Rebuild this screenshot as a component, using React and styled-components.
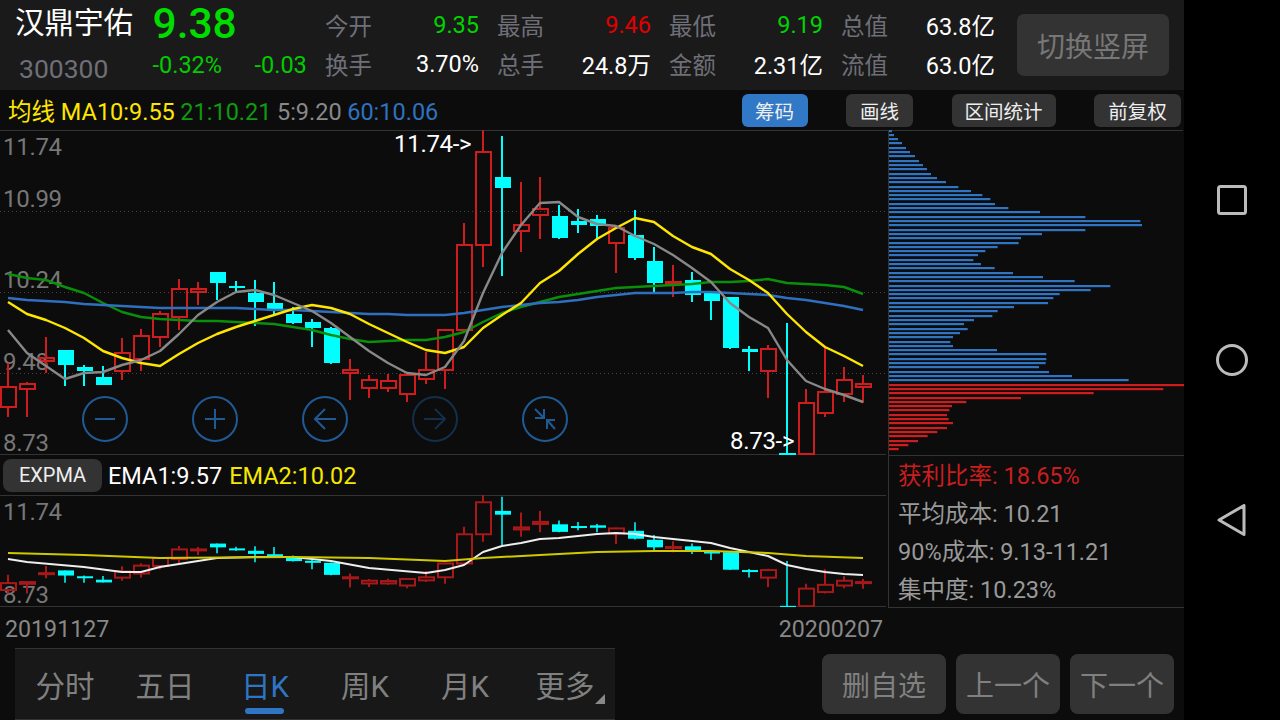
import React from 'react';
import styled, { createGlobalStyle } from 'styled-components';

const GlobalStyle = createGlobalStyle`
  html, body {
    margin: 0;
    background: #000;
    font-family: Roboto, "Noto Sans CJK SC", sans-serif;
  }
  * { box-sizing: border-box; }
`;

// [high, bodyTop, bodyBottom, low, kind]
const candles = [
  [363, 387, 407, 417, 'r'], [382, 384, 389, 417, 'r'], [337, 358, 361, 373, 'r'], [350, 350, 365, 386, 'c'],
  [365, 367, 371, 386, 'c'], [366, 377, 385, 385, 'c'], [338, 353, 371, 380, 'r'], [329, 336, 359, 371, 'r'],
  [311, 314, 337, 347, 'r'], [279, 289, 317, 330, 'r'], [282, 289, 292, 305, 'r'], [272, 272, 283, 300, 'c'],
  [281, 286, 288, 293, 'c'], [280, 293, 302, 326, 'c'], [282, 303, 311, 314, 'c'], [307, 314, 323, 324, 'c'],
  [319, 322, 328, 347, 'c'], [327, 328, 363, 364, 'c'], [359, 370, 373, 400, 'r'], [375, 380, 388, 398, 'r'],
  [374, 381, 388, 392, 'r'], [375, 375, 394, 402, 'r'], [352, 370, 379, 384, 'r'], [330, 330, 370, 389, 'r'],
  [223, 245, 330, 331, 'r'], [130, 152, 245, 267, 'r'], [136, 177, 188, 276, 'c'], [182, 225, 231, 252, 'r'],
  [177, 209, 215, 239, 'r'], [205, 216, 238, 239, 'c'], [209, 221, 225, 233, 'c'], [215, 219, 226, 239, 'c'],
  [225, 228, 243, 273, 'r'], [210, 235, 258, 260, 'c'], [247, 261, 283, 292, 'c'], [265, 282, 284, 297, 'r'],
  [272, 280, 295, 302, 'c'], [293, 293, 301, 320, 'c'], [297, 297, 348, 349, 'c'], [346, 349, 352, 371, 'c'],
  [345, 349, 371, 398, 'r'], [323, 453, 454, 454, 'c'], [389, 403, 454, 454, 'r'], [347, 392, 413, 417, 'r'],
  [367, 380, 394, 402, 'r'], [375, 384, 387, 403, 'r'],
];

const yellowLine = [302, 314, 320, 328, 338, 351, 358, 363, 366, 354, 343, 334, 327, 321, 315, 309, 305, 308, 314, 324, 333, 342, 350, 353, 347, 328, 315, 303, 283, 271, 254, 239, 228, 218, 222, 236, 247, 254, 269, 280, 293, 314, 332, 347, 356, 366];
const grayLine = [330, 353, 366, 379, 373, 372, 365, 360, 351, 334, 315, 302, 292, 290, 295, 303, 311, 323, 337, 351, 363, 373, 375, 367, 341, 293, 253, 225, 203, 202, 217, 224, 226, 236, 244, 255, 268, 282, 303, 317, 328, 360, 381, 389, 395, 402];
const greenLine = [274, 278, 280, 287, 293, 303, 312, 317, 319, 320, 321, 321, 322, 323, 324, 327, 330, 335, 339, 342, 341, 340, 340, 337, 332, 322, 313, 307, 302, 297, 294, 291, 288, 287, 286, 285, 284, 282, 282, 281, 279, 283, 284, 285, 287, 294];
const blueLine = [298, 300, 301, 302, 304, 305, 306, 307, 308, 308, 308, 308, 308, 309, 310, 310, 311, 312, 313, 314, 314, 315, 315, 315, 313, 310, 307, 305, 303, 302, 300, 297, 295, 293, 293, 293, 292, 292, 293, 294, 295, 298, 300, 303, 306, 310];

const emaWhite = [[8, 559], [27, 562], [84, 567], [122, 572], [141, 572], [160, 567], [217, 558], [255, 557], [293, 557], [331, 561], [369, 568], [426, 573], [445, 570], [464, 565], [483, 552], [502, 546], [521, 543], [540, 539], [559, 538], [578, 536], [597, 534], [616, 533], [635, 534], [654, 537], [673, 539], [692, 541], [711, 543], [730, 548], [749, 552], [768, 556], [787, 565], [806, 569], [825, 572], [844, 574], [863, 575]];
const emaYellow = [[8, 553], [84, 555], [160, 558], [293, 557], [369, 558], [445, 561], [483, 558], [540, 555], [597, 552], [654, 551], [711, 551], [768, 553], [806, 556], [863, 558]];

// y and right edge of each bar, in px/3 from the crop of the chip distribution
const blueBars = [[3, 18], [15, 24], [27, 36], [39, 48], [54, 60], [66, 72], [78, 87], [93, 99], [105, 111], [117, 123], [132, 135], [144, 153], [156, 180], [171, 217], [183, 255], [195, 289], [207, 313], [222, 327], [234, 367], [246, 462], [261, 598], [273, 763], [285, 768], [300, 598], [312, 468], [324, 405], [339, 398], [351, 335], [363, 298], [375, 276], [390, 262], [402, 285], [414, 326], [429, 381], [441, 471], [453, 566], [468, 673], [480, 614], [492, 521], [504, 502], [519, 486], [531, 384], [543, 335], [558, 319], [570, 264], [582, 234], [597, 245], [609, 222], [621, 201], [636, 193], [648, 201], [660, 333], [672, 481], [687, 481], [699, 479], [711, 459], [726, 489], [738, 558], [750, 728]];
const redBars = [[765, 894], [777, 832], [789, 623], [804, 405], [816, 241], [828, 198], [840, 190], [855, 183], [867, 188], [879, 201], [894, 183], [906, 154], [918, 125], [933, 96], [945, 67], [957, 38]];

const stats = [
  [['今开', '9.35', '#00d400'], ['换手', '3.70%', '#fff']],
  [['最高', '9.46', '#e00000'], ['总手', '24.8万', '#fff']],
  [['最低', '9.19', '#00d400'], ['金额', '2.31亿', '#fff']],
  [['总值', '63.8亿', '#fff'], ['流值', '63.0亿', '#fff']],
];

const tabs = ['分时', '五日', '日K', '周K', '月K', '更多'];

const Screen = styled.div`
  width: 1280px;
  height: 720px;
  display: flex;
  overflow: hidden;
  background: #000;
`;
const Main = styled.div`
  width: 1184px;
  height: 720px;
  display: flex;
  flex-direction: column;
  background: #0c0c0c;
`;
const Header = styled.header`
  height: 90px;
  flex: none;
  display: flex;
  padding: 5px 15px 0;
  background: #1a1a1a;
`;
const Identity = styled.div`
  width: 310px;
  display: grid;
  grid-template-columns: 137.5px 102px 70.5px;
  grid-template-rows: 39px 39px;
  align-items: center;
`;
const Name = styled.div`
  padding-bottom: 4px;
  font-size: 29.5px;
  color: #fff;
  line-height: 32px;
`;
const Price = styled.div`
  grid-column: span 2;
  padding-bottom: 2px;
  font-size: 42.5px;
  font-weight: 500;
  color: #00dc00;
  line-height: 40px;
`;
const Code = styled.div`
  padding: 10px 0 0 4px;
  font-size: 26.5px;
  color: #6f6f78;
`;
const Change = styled.div`
  padding-top: 2px;
  font-size: 23.5px;
  color: #00cc00;
`;
const StatGrid = styled.div`
  display: grid;
  grid-template-columns: repeat(4, 154px);
  grid-template-rows: 39px 39px;
  column-gap: 18px;
  align-items: center;
`;
const Stat = styled.div`
  display: flex;
  justify-content: space-between;
  align-items: center;
`;
const StatLabel = styled.span`
  font-size: 23.5px;
  color: #6f6f78;
`;
const StatValue = styled.span`
  font-size: 23.5px;
  color: ${(p) => p.$color};
`;
const SwitchButton = styled.div`
  width: 152px;
  height: 62px;
  margin: 9px 0 0 22px;
  display: flex;
  align-items: center;
  justify-content: center;
  border-radius: 7px;
  background: #333;
  font-size: 28px;
  color: #777;
`;
const Toolbar = styled.div`
  height: 40px;
  flex: none;
  display: flex;
  align-items: center;
  gap: 38.5px;
  padding: 0 3px 0 8px;
  background: #0c0c0c;
`;
const MaList = styled.div`
  margin-right: auto;
  display: flex;
  align-items: baseline;
  gap: 5.5px;
  font-size: 23.5px;
`;
const MaItem = styled.span`
  color: ${(p) => p.$color};
`;
const ToolButton = styled.div`
  width: ${(p) => p.$width}px;
  height: 33px;
  display: flex;
  align-items: center;
  justify-content: center;
  border-radius: 6px;
  background: ${(p) => (p.$active ? '#3178c6' : '#333')};
  font-size: 19.5px;
  color: #eee;
`;
const ChartArea = styled.div`
  height: 477px;
  flex: none;
  display: grid;
  grid-template-columns: 888px 296px;
`;
const LeftCharts = styled.div`
  display: flex;
  flex-direction: column;
`;
const PricePane = styled.div`
  position: relative;
  height: 325px;
  flex: none;
`;
const ChartSvg = styled.svg`
  position: relative;
  display: block;
`;
const AxisLabel = styled.span`
  position: absolute;
  left: 3px;
  top: ${(p) => p.$top}px;
  font-size: 24px;
  letter-spacing: -0.3px;
  line-height: 28px;
  color: #777;
`;
const ExtremeLabel = styled.span`
  position: absolute;
  left: ${(p) => p.$left}px;
  top: ${(p) => p.$top}px;
  font-size: 24px;
  letter-spacing: -0.3px;
  line-height: 28px;
  color: #fff;
  z-index: 2;
`;
const ZoomControls = styled.div`
  position: absolute;
  left: 82px;
  top: 266px;
  display: flex;
  gap: 64px;
  z-index: 2;
`;
const IndicatorRow = styled.div`
  height: 40px;
  flex: none;
  display: flex;
  align-items: center;
  padding-left: 3px;
  font-size: 23.5px;
`;
const IndicatorButton = styled.div`
  width: 99px;
  height: 33px;
  margin-right: 6px;
  display: flex;
  align-items: center;
  justify-content: center;
  border-radius: 8px;
  background: #333;
  font-size: 20px;
  color: #eee;
`;
const EmaValue = styled.span`
  margin-right: 7px;
  padding-top: 2px;
  color: ${(p) => p.$color};
`;
const SubPane = styled.div`
  position: relative;
  height: 112px;
  flex: none;
`;
const RightCharts = styled.div`
  display: flex;
  flex-direction: column;
`;
const ProfilePane = styled.div`
  height: 325px;
  flex: none;
`;
const InfoPanel = styled.div`
  height: 153px;
  flex: none;
  padding: 0 0 0 9px;
  border: 1px solid #333;
  border-width: 1px 0 1px 1px;
`;
const InfoRow = styled.div`
  height: 38px;
  padding-bottom: 2px;
  display: flex;
  align-items: center;
  font-size: 23.5px;
  color: ${(p) => p.$color};
`;
const DateRow = styled.div`
  height: 41px;
  flex: none;
  width: 878px;
  margin-left: 5px;
  padding-top: 2px;
  display: flex;
  justify-content: space-between;
  align-items: center;
  font-size: 23.2px;
  color: #888;
`;
const Footer = styled.footer`
  height: 72px;
  flex: none;
  display: flex;
  padding: 0 10px 0 15px;
`;
const TabBar = styled.nav`
  width: 600px;
  display: flex;
  background: #181818;
  border-top: 1px solid #333;
  border-bottom: 1px solid #333;
`;
const Tab = styled.div`
  position: relative;
  flex: 1;
  display: flex;
  align-items: center;
  justify-content: center;
  font-size: 29.5px;
  color: ${(p) => (p.$active ? '#2f75c4' : '#808080')};
`;
const TabUnderline = styled.span`
  position: absolute;
  left: 30px;
  bottom: 5px;
  width: 39px;
  height: 6px;
  border-radius: 3px;
  background: #2f75c4;
`;
const MoreMark = styled.span`
  position: absolute;
  right: 10px;
  bottom: 15px;
  width: 10px;
  height: 10px;
  background: #888;
  clip-path: polygon(100% 0, 100% 100%, 0 100%);
`;
const Actions = styled.div`
  margin-left: auto;
  padding-top: 6px;
  display: flex;
  gap: 10px;
`;
const ActionButton = styled.div`
  width: ${(p) => p.$width}px;
  height: 60px;
  display: flex;
  align-items: center;
  justify-content: center;
  border-radius: 8px;
  background: #333;
  font-size: 28px;
  color: #808080;
`;
const NavBar = styled.div`
  width: 96px;
  height: 720px;
  display: flex;
  flex-direction: column;
  align-items: center;
  justify-content: center;
  gap: 128px;
  background: #000;
`;

const polyPoints = (ys) => ys.map((y, i) => `${8 + 19 * i},${y}`).join(' ');

const Candle = ({ data, x, map, red, cyanWick }) => {
  const [high, top, bottom, low, kind] = data;
  const [h, t, b, l] = [high, top, bottom, low].map(map);
  if (kind === 'r') {
    return (
      <g stroke={red} strokeWidth="2" fill="none">
        <line x1={x} x2={x} y1={h} y2={t} />
        <line x1={x} x2={x} y1={b} y2={l} />
        <rect x={x - 7} y={t} width={15} height={Math.max(b - t, 1)} />
      </g>
    );
  }
  return (
    <g>
      <line x1={x} x2={x} y1={h} y2={l} stroke={cyanWick} strokeWidth="2" />
      <rect x={x - 7} y={t} width={16} height={Math.max(b - t, 2)} fill="#00ffff" />
    </g>
  );
};

const MaLine = ({ points, color, width = 2.4 }) => (
  <polyline points={points} fill="none" stroke={color} strokeWidth={width} strokeLinejoin="round" />
);

const CircleButton = ({ dim, children }) => (
  <svg width="46" height="46" viewBox="-23 -23 46 46" fill="none" stroke={dim ? '#142f4b' : '#1f5a94'} strokeWidth="2">
    <circle r="22" />
    {children}
  </svg>
);

const PriceChart = () => (
  <ChartSvg width="888" height="325" viewBox="0 130 888 325">
    <line x1="0" x2="888" y1="130.5" y2="130.5" stroke="#333" />
    {[211.5, 292.5, 373.5].map((y) => (
      <line key={y} x1="0" x2="886" y1={y} y2={y} stroke="#444" strokeDasharray="1 3" />
    ))}
    <line x1="0" x2="886" y1="454.5" y2="454.5" stroke="#333" />
    {candles.map((c, i) => (
      <Candle key={i} data={c} x={8 + 19 * i} map={(y) => y} red="#d01c1c" cyanWick="#00ffff" />
    ))}
    <line x1="779" x2="795" y1="454" y2="454" stroke="#00ffff" strokeWidth="2" />
    <MaLine points={polyPoints(greenLine)} color="#0a8f0a" />
    <MaLine points={polyPoints(blueLine)} color="#2f6fbf" />
    <MaLine points={polyPoints(yellowLine)} color="#ffe600" />
    <MaLine points={polyPoints(grayLine)} color="#888" />
  </ChartSvg>
);

const SubChart = () => (
  <ChartSvg width="888" height="112" viewBox="0 495 888 112">
    <line x1="0" x2="886" y1="495.5" y2="495.5" stroke="#333" />
    <line x1="0" x2="886" y1="606.5" y2="606.5" stroke="#333" />
    {candles.map((c, i) => (
      <Candle key={i} data={c} x={8 + 19 * i} map={(y) => 450 + 0.344 * y} red="#a81818" cyanWick="#00c8c8" />
    ))}
    <MaLine points={emaWhite.map((p) => p.join(',')).join(' ')} color="#eee" width={2} />
    <MaLine points={emaYellow.map((p) => p.join(',')).join(' ')} color="#d0c800" width={2} />
  </ChartSvg>
);

const ProfileChart = () => (
  <ChartSvg width="296" height="325" viewBox="0 0 296 325">
    <line x1="0" x2="295" y1="0.5" y2="0.5" stroke="#333" />
    <line x1="0.5" x2="0.5" y1="0" y2="325" stroke="#333" />
    {blueBars.map(([y, end]) => (
      <rect key={y} x="1" y={y / 3 - 1} width={(end - 9) / 3} height="2.2" fill="#2f75c4" />
    ))}
    {redBars.map(([y, end]) => (
      <rect key={y} x="1" y={y / 3 - 1} width={(end - 9) / 3} height="2.2" fill="#d01c1c" />
    ))}
  </ChartSvg>
);

export default function App() {
  return (
    <Screen>
      <GlobalStyle />
      <Main>
        <Header>
          <Identity>
            <Name>汉鼎宇佑</Name>
            <Price>9.38</Price>
            <Code>300300</Code>
            <Change>-0.32%</Change>
            <Change>-0.03</Change>
          </Identity>
          <StatGrid>
            {[0, 1].flatMap((row) =>
              stats.map((group) => (
                <Stat key={group[row][0]}>
                  <StatLabel>{group[row][0]}</StatLabel>
                  <StatValue $color={group[row][2]}>{group[row][1]}</StatValue>
                </Stat>
              ))
            )}
          </StatGrid>
          <SwitchButton>切换竖屏</SwitchButton>
        </Header>

        <Toolbar>
          <MaList>
            <MaItem $color="#ffe600">均线 MA10:9.55</MaItem>
            <MaItem $color="#0f9a0f">21:10.21</MaItem>
            <MaItem $color="#888">5:9.20</MaItem>
            <MaItem $color="#2f72c0">60:10.06</MaItem>
          </MaList>
          <ToolButton $active $width={66}>筹码</ToolButton>
          <ToolButton $width={67}>画线</ToolButton>
          <ToolButton $width={104}>区间统计</ToolButton>
          <ToolButton $width={87}>前复权</ToolButton>
        </Toolbar>

        <ChartArea>
          <LeftCharts>
            <PricePane>
              <AxisLabel $top={3}>11.74</AxisLabel>
              <AxisLabel $top={55}>10.99</AxisLabel>
              <AxisLabel $top={136}>10.24</AxisLabel>
              <AxisLabel $top={218}>9.48</AxisLabel>
              <AxisLabel $top={299}>8.73</AxisLabel>
              <PriceChart />
              <ExtremeLabel $left={394} $top={0}>11.74-&gt;</ExtremeLabel>
              <ExtremeLabel $left={730} $top={297}>8.73-&gt;</ExtremeLabel>
              <ZoomControls>
                <CircleButton>
                  <path d="M-10 0H10" />
                </CircleButton>
                <CircleButton>
                  <path d="M-10 0H10M0 -10V10" />
                </CircleButton>
                <CircleButton>
                  <path d="M-10 0H11M0 -10L-10 0L0 10" />
                </CircleButton>
                <CircleButton dim>
                  <path d="M-11 0H10M0 -10L10 0L0 10" />
                </CircleButton>
                <CircleButton>
                  <path d="M-10 -10L-1 -1M-10 -1H-1V-10M10 10L2 1M10 1H2V10" />
                </CircleButton>
              </ZoomControls>
            </PricePane>
            <IndicatorRow>
              <IndicatorButton>EXPMA</IndicatorButton>
              <EmaValue $color="#fff">EMA1:9.57</EmaValue>
              <EmaValue $color="#f5e800">EMA2:10.02</EmaValue>
            </IndicatorRow>
            <SubPane>
              <AxisLabel $top={3}>11.74</AxisLabel>
              <AxisLabel $top={86}>8.73</AxisLabel>
              <SubChart />
            </SubPane>
          </LeftCharts>
          <RightCharts>
            <ProfilePane>
              <ProfileChart />
            </ProfilePane>
            <InfoPanel>
              <InfoRow $color="#c81e1e">获利比率: 18.65%</InfoRow>
              <InfoRow $color="#999">平均成本: 10.21</InfoRow>
              <InfoRow $color="#999">90%成本: 9.13-11.21</InfoRow>
              <InfoRow $color="#999">集中度: 10.23%</InfoRow>
            </InfoPanel>
          </RightCharts>
        </ChartArea>

        <DateRow>
          <span>20191127</span>
          <span>20200207</span>
        </DateRow>

        <Footer>
          <TabBar>
            {tabs.map((t) => (
              <Tab key={t} $active={t === '日K'}>
                {t}
                {t === '日K' && <TabUnderline />}
                {t === '更多' && <MoreMark />}
              </Tab>
            ))}
          </TabBar>
          <Actions>
            <ActionButton $width={124}>删自选</ActionButton>
            <ActionButton $width={104}>上一个</ActionButton>
            <ActionButton $width={104}>下一个</ActionButton>
          </Actions>
        </Footer>
      </Main>

      <NavBar>
        <svg width="32" height="32" viewBox="0 0 32 32" fill="none" stroke="#bbb" strokeWidth="3">
          <rect x="2.5" y="2.5" width="27" height="27" rx="2" />
        </svg>
        <svg width="32" height="32" viewBox="0 0 32 32" fill="none" stroke="#bbb" strokeWidth="3">
          <circle cx="16" cy="16" r="14.5" />
        </svg>
        <svg width="32" height="32" viewBox="0 0 32 32" fill="none" stroke="#bbb" strokeWidth="3" strokeLinejoin="round">
          <path d="M3 16L28 1.5V30.5Z" />
        </svg>
      </NavBar>
    </Screen>
  );
}
